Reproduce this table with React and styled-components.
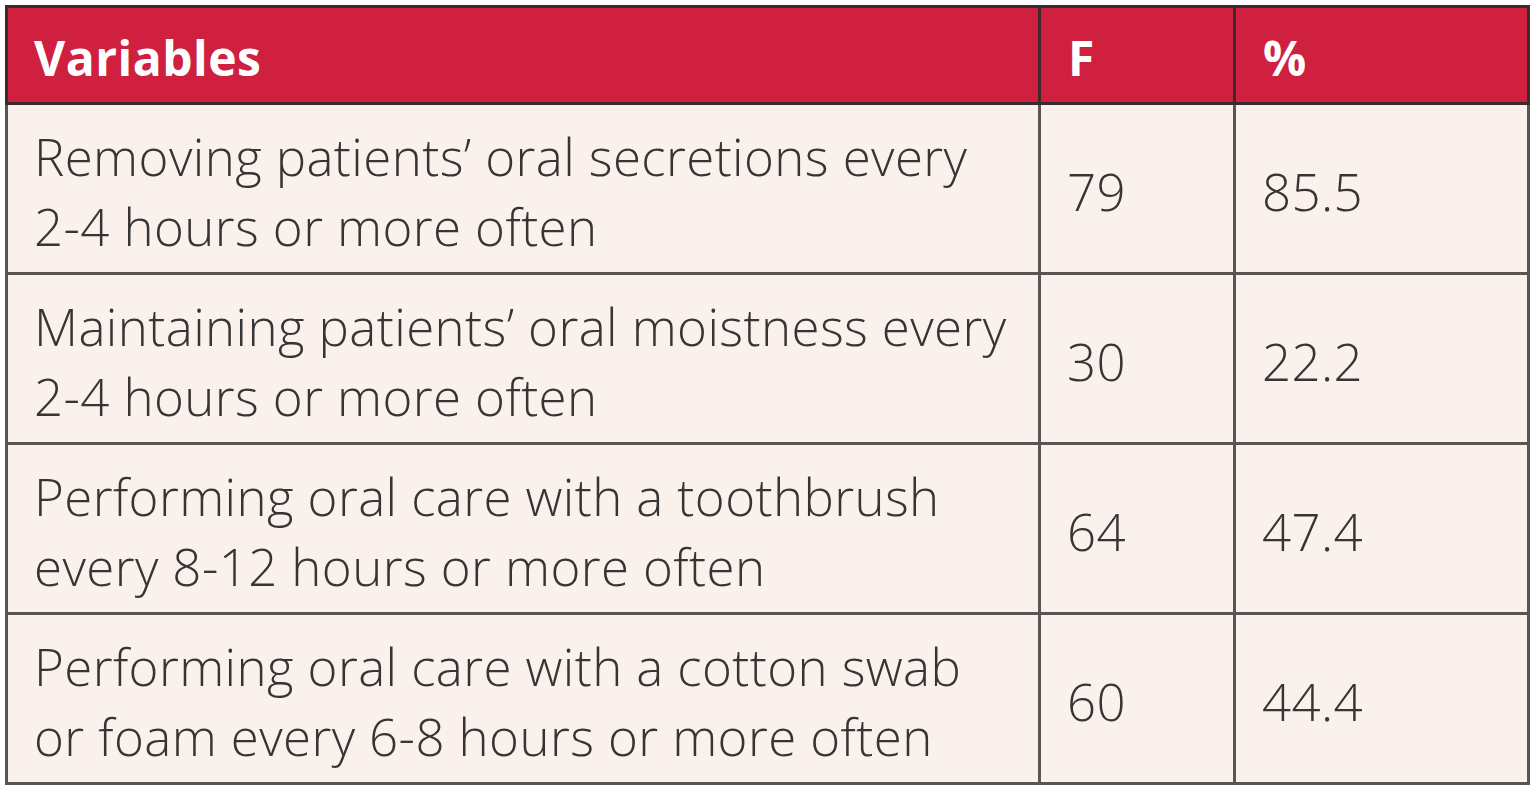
import styled, { createGlobalStyle } from 'styled-components';

const GlobalStyle = createGlobalStyle`
  body {
    margin: 0;
    background: #ffffff;
    font-family: "Open Sans", "Liberation Sans", sans-serif;
  }
`;

const Page = styled.div`
  padding: 5px;
`;

const Table = styled.table`
  width: 1522px;
  border-collapse: collapse;
  border: 3px solid #5a5555;
  table-layout: fixed;
`;

const HeadCell = styled.th`
  background-color: #cf2040;
  color: #ffffff;
  font-weight: 700;
  font-size: 48px;
  text-align: left;
  height: 90px;
  padding: 4px 0 0 ${(p) => p.$pad || 26}px;
  border: 3px solid #3b2a2e;
  letter-spacing: 0.5px;
`;

const Cell = styled.td`
  background-color: #faf1ed;
  color: #363434;
  font-weight: 350;
  font-size: 51px;
  line-height: 70px;
  height: 163px;
  padding: 4px 0 0 ${(p) => p.$pad || 26}px;
  border: 3px solid #595555;
  vertical-align: middle;
  letter-spacing: 0.4px;
`;

const rows = [
  ['Removing patients’ oral secretions every', '2-4 hours or more often', '79', '85.5'],
  ['Maintaining patients’ oral moistness every', '2-4 hours or more often', '30', '22.2'],
  ['Performing oral care with a toothbrush', 'every 8-12 hours or more often', '64', '47.4'],
  ['Performing oral care with a cotton swab', 'or foam every 6-8 hours or more often', '60', '44.4'],
];

export default function App() {
  return (
    <Page>
      <GlobalStyle />
      <Table>
        <colgroup>
          <col style={{ width: 1033 }} />
          <col style={{ width: 195 }} />
          <col style={{ width: 294 }} />
        </colgroup>
        <thead>
          <tr>
            <HeadCell>Variables</HeadCell>
            <HeadCell $pad={27}>F</HeadCell>
            <HeadCell $pad={27}>%</HeadCell>
          </tr>
        </thead>
        <tbody>
          {rows.map(([a, b, f, pct]) => (
            <tr key={f}>
              <Cell>
                {a}
                <br />
                {b}
              </Cell>
              <Cell $pad={26}>{f}</Cell>
              <Cell $pad={26}>{pct}</Cell>
            </tr>
          ))}
        </tbody>
      </Table>
    </Page>
  );
}
